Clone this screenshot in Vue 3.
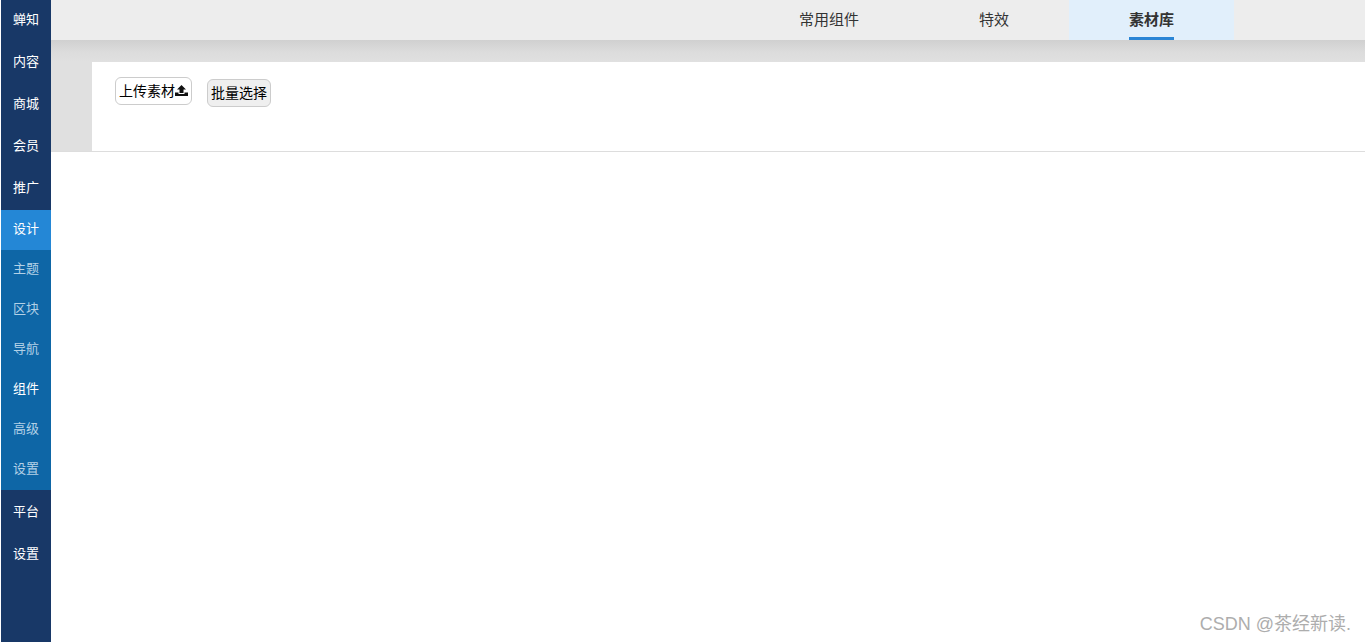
<script setup>
const topMenu = ["蝉知", "内容", "商城", "会员", "推广"];
const designMenu = [
  { name: "设计", active: true },
  { name: "主题" },
  { name: "区块" },
  { name: "导航" },
  { name: "组件", bright: true },
  { name: "高级" },
  { name: "设置" },
];
const bottomMenu = ["平台", "设置"];
const tabs = [
  { name: "常用组件" },
  { name: "特效" },
  { name: "素材库", active: true },
];
</script>

<template>
  <div class="page">
    <aside class="sidebar">
      <div class="menu-top">
        <a v-for="item in topMenu" :key="item" class="main-link">{{ item }}</a>
      </div>
      <div class="menu-design">
        <a
          v-for="item in designMenu"
          :key="item.name"
          class="sub-link"
          :class="{ active: item.active, bright: item.bright }"
        >
          {{ item.name }}
        </a>
      </div>
      <div class="menu-bottom">
        <a v-for="item in bottomMenu" :key="item" class="main-link">{{ item }}</a>
      </div>
    </aside>

    <main class="main">
      <nav class="tabs">
        <a
          v-for="tab in tabs"
          :key="tab.name"
          class="tab"
          :class="{ active: tab.active }"
        >
          <span class="tab-label">{{ tab.name }}</span>
        </a>
      </nav>
      <div class="toolbar-area">
        <div class="toolbar">
          <button class="btn btn-upload">
            上传素材<svg class="upload-icon" viewBox="0 0 13 11" width="13" height="11">
              <path d="M6.5 0 11 4.5H8.5V8h-4V4.5H2z" fill="#111" />
              <path d="M0 11V7.5h3.5V9h6V7.5H13V11z" fill="#111" />
            </svg>
          </button>
          <button class="btn btn-select">批量选择</button>
        </div>
      </div>
    </main>

    <div class="watermark">CSDN @茶经新读.</div>
  </div>
</template>

<style>
html,
body {
  margin: 0;
  background: #fff;
}
</style>

<style scoped>
.page {
  display: flex;
  position: relative;
  height: 642px;
  overflow: hidden;
  font-family: "Liberation Sans", "Noto Sans CJK SC", sans-serif;
}

.sidebar {
  width: 50px;
  margin-left: 1px;
  display: flex;
  flex-direction: column;
  background-color: #183867;
  font-size: 13px;
}

.main-link {
  display: block;
  height: 42px;
  line-height: 40px;
  text-align: center;
  color: #fff;
}

.menu-top {
  display: flex;
  flex-direction: column;
}

.menu-design {
  display: flex;
  flex-direction: column;
  background-color: #0e66a6;
}

.menu-bottom {
  display: flex;
  flex-direction: column;
  padding-top: 1px;
}
.menu-bottom .main-link {
  line-height: 42px;
}

.sub-link {
  display: block;
  height: 40px;
  line-height: 38px;
  text-align: center;
  color: #b3d1e6;
}
.sub-link.bright {
  color: #fff;
}
.sub-link.active {
  background-color: #2487d6;
  color: #fff;
}

.main {
  flex: 1;
  display: flex;
  flex-direction: column;
}

.tabs {
  display: flex;
  justify-content: flex-end;
  height: 40px;
  padding-right: 131px;
  background-color: #ededed;
}

.tab {
  display: block;
  padding: 0 60px;
  font-size: 15px;
  color: #333;
}
.tab.active {
  background-color: #e1effb;
  font-weight: 700;
}
.tab-label {
  display: block;
  height: 37px;
  line-height: 39px;
}
.tab.active .tab-label {
  border-bottom: 3px solid #2a85d5;
}

.toolbar-area {
  height: 112px;
  padding: 22px 0 0 41px;
  box-sizing: border-box;
  background: linear-gradient(to bottom, #d0d0d0, #dcdcdc 12px, #e0e0e0 22px);
  border-bottom: 1px solid #ddd;
}

.toolbar {
  display: flex;
  align-items: flex-start;
  gap: 15px;
  height: 100%;
  box-sizing: border-box;
  padding: 15px 0 0 23px;
  background-color: #fff;
}

.btn {
  box-sizing: border-box;
  height: 28px;
  border: 1px solid #ccc;
  border-radius: 6px;
  padding: 0 0 2px;
  font-family: inherit;
  font-size: 14px;
  color: #000;
}

.btn-upload {
  display: flex;
  align-items: center;
  width: 77px;
  padding-left: 3px;
  background-color: #fff;
}

.upload-icon {
  flex-shrink: 0;
}

.btn-select {
  width: 64px;
  margin-top: 2px;
  background-color: #efefef;
}

.watermark {
  position: absolute;
  right: 14px;
  bottom: 7px;
  font-size: 18px;
  color: #adadad;
}
</style>
